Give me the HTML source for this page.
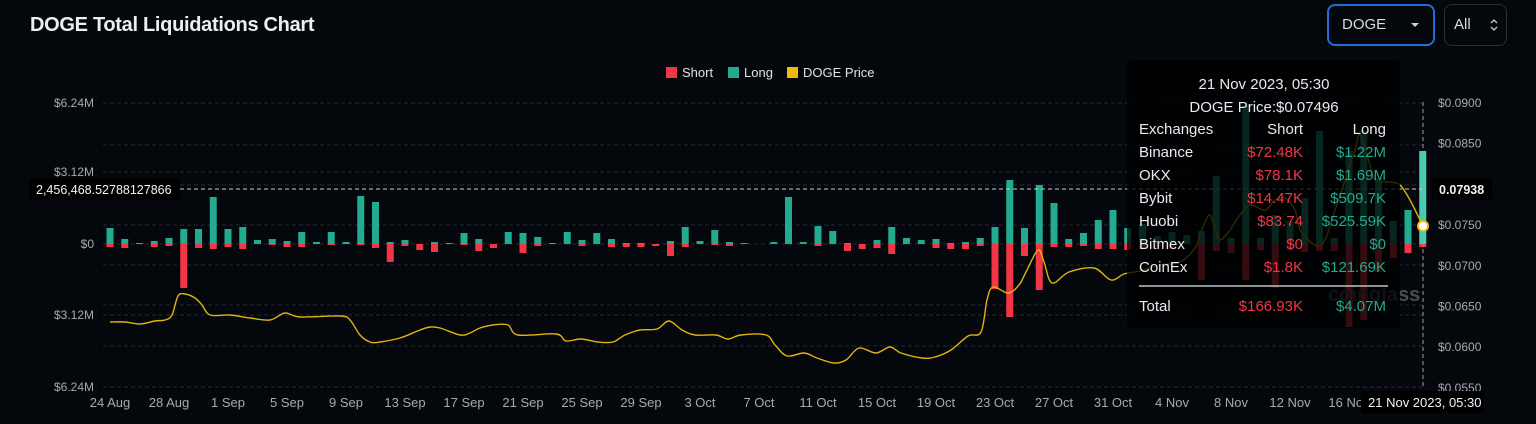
<!DOCTYPE html>
<html><head><meta charset="utf-8"><style>
html,body{margin:0;padding:0;background:#04070c;width:1536px;height:424px;overflow:hidden;font-family:"Liberation Sans",sans-serif;}
.t{position:absolute;left:30px;top:14px;color:#eceef2;font-size:20px;font-weight:bold;letter-spacing:-0.3px}
.sel{position:absolute;left:1327px;top:4px;width:104px;height:38px;border:2px solid #1f6fd6;border-radius:8px;color:#d8dbe0;font-size:15px;line-height:38px;box-sizing:content-box}
.sel span{position:absolute;left:13px}
.sel i{position:absolute;left:82px;top:17px;width:0;height:0;border-left:4px solid transparent;border-right:4px solid transparent;border-top:4px solid #c8cbd0}
.all{position:absolute;left:1444px;top:4px;width:61px;height:40px;border:1px solid #2a2e36;border-radius:8px;color:#d8dbe0;font-size:15px;line-height:40px}
.all span{position:absolute;left:9px}
svg{position:absolute;left:0;top:0}
</style></head><body>
<div class="t">DOGE Total Liquidations Chart</div>
<div class="sel"><span>DOGE</span><i></i></div>
<div class="all"><span>All</span>
<svg style="left:44px;top:12px" width="10" height="16"><path d="M2 6 L5 3 L8 6 M2 10 L5 13 L8 10" stroke="#c8cbd0" stroke-width="1.3" fill="none"/></svg></div>
<svg id="c" width="1536" height="424" xmlns="http://www.w3.org/2000/svg" font-family="Liberation Sans, sans-serif"></svg>
<script>
var L=[16,5,1,3,6,15,15,47,15,17,4,5,3,12,2,12,2,48,42,2,4,0,2,1,11,5,0,12,11,7,1,12,4,11,5,1,1,0,3,17,3,14,2,1,0,2,47,2,18,13,1,0,4,17,6,4,5,1,2,6,17,64,16,59,41,5,11,24,34,16,20,8,12,9,13,68,6,139,6,29,23,46,113,6,93,113,66,23,34,93];
var S=[3,4,0,3,2,44,4,5,3,5,0,1,3,3,0,1,0,1,4,18,2,6,8,0,1,7,4,0,9,2,0,0,2,0,3,3,3,2,12,3,0,1,2,0,0,0,0,0,2,0,7,5,4,10,0,0,4,5,5,2,45,73,12,46,3,3,2,5,5,6,4,3,5,0,36,7,9,36,6,44,6,8,7,7,83,76,28,14,9,3];
var P=[[110,322],[125,322],[140,324],[155,321],[165,320],[172,315],[178,296],[185,294],[195,298],[202,305],[210,315],[230,315],[250,318],[270,320],[285,313],[300,317],[340,316],[350,320],[360,335],[370,342],[380,342],[400,338],[420,330],[430,327],[440,328],[460,335],[470,333],[480,328],[493,325],[508,325],[518,335],[556,334],[566,341],[581,339],[598,342],[613,342],[625,335],[640,330],[657,329],[669,321],[682,330],[695,335],[716,335],[728,339],[741,335],[766,335],[775,345],[787,356],[804,353],[817,358],[834,363],[846,360],[859,348],[876,353],[890,347],[901,353],[922,358],[935,357],[951,350],[968,336],[981,332],[987,300],[993,287],[1008,293],[1019,285],[1027,270],[1038,250],[1044,262],[1052,283],[1069,272],[1094,268],[1111,280],[1124,274],[1140,271],[1160,265],[1180,262],[1195,248],[1200,235],[1205,222],[1210,215],[1215,228],[1220,240],[1230,230],[1240,215],[1250,205],[1265,210],[1275,200],[1285,198],[1295,210],[1300,230],[1315,245],[1325,240],[1335,210],[1345,180],[1355,150],[1360,135],[1370,165],[1375,180],[1390,182],[1400,185],[1410,200],[1423,226]];
var s='';
var grid=[103,145,172,185,225,244,265,305,315,346,387];
grid.forEach(function(y){s+='<line x1="103" x2="1425" y1="'+y+'" y2="'+y+'" stroke="#262a30" stroke-dasharray="4 3"/>';});
var la=[['$6.24M',103],['$3.12M',172],['$0',244],['$3.12M',315],['$6.24M',387]];
la.forEach(function(a){s+='<text x="94" y="'+(a[1]+4)+'" text-anchor="end" fill="#a7aab0" font-size="12">'+a[0]+'</text>';});
var ra=['$0.0900','$0.0850','$0.0800','$0.0750','$0.0700','$0.0650','$0.0600','$0.0550'];
ra.forEach(function(t,i){if(i==2)return;var y=102+i*40.7;s+='<text x="1438" y="'+(y+5)+'" fill="#a7aab0" font-size="12">'+t+'</text>';});
var xl=['24 Aug','28 Aug','1 Sep','5 Sep','9 Sep','13 Sep','17 Sep','21 Sep','25 Sep','29 Sep','3 Oct','7 Oct','11 Oct','15 Oct','19 Oct','23 Oct','27 Oct','31 Oct','4 Nov','8 Nov','12 Nov','16 Nov'];
xl.forEach(function(t,i){s+='<text x="'+(110+i*59)+'" y="407" text-anchor="middle" fill="#a7aab0" font-size="13">'+t+'</text>';});
for(var i=0;i<90;i++){var x=110+i*14.75-3.5;
 if(L[i])s+='<rect x="'+x+'" y="'+(244-L[i])+'" width="7" height="'+L[i]+'" fill="'+(i==89?'#3fd1b4':'#22ab91')+'"/>';
 if(S[i])s+='<rect x="'+x+'" y="244" width="7" height="'+S[i]+'" fill="#f23645"/>';}
var d='M'+P[0][0]+' '+P[0][1];
for(var k=0;k<P.length-1;k++){var p0=P[k?k-1:0],p1=P[k],p2=P[k+1],p3=P[k+2<P.length?k+2:k+1];
 var c1x=p1[0]+(p2[0]-p0[0])/6,c1y=p1[1]+(p2[1]-p0[1])/6,c2x=p2[0]-(p3[0]-p1[0])/6,c2y=p2[1]-(p3[1]-p1[1])/6;
 d+=' C'+c1x.toFixed(1)+' '+c1y.toFixed(1)+' '+c2x.toFixed(1)+' '+c2y.toFixed(1)+' '+p2[0]+' '+p2[1];}
s+='<path d="'+d+'" fill="none" stroke="#e0b30e" stroke-width="1.4" stroke-linejoin="round"/>';
s+='<line x1="103" x2="1425" y1="189" y2="189" stroke="#c8ccd2" stroke-dasharray="4 3"/>';
s+='<line x1="1423" x2="1423" y1="102" y2="387" stroke="#9aa0a8" stroke-dasharray="4 3"/>';
s+='<text x="1328" y="301" fill="#4a4d52" font-size="20" font-weight="bold">coinglass</text>';
s+='<rect x="1127" y="60" width="273" height="268" rx="4" fill="#000" fill-opacity="0.78"/>';
s+='<circle cx="1423" cy="226" r="5" fill="#fff" stroke="#f0b90b" stroke-width="2"/>';
s+='<g font-size="15" fill="#e8eaee"><text x="1264" y="89" text-anchor="middle">21 Nov 2023, 05:30</text><text x="1264" y="112" text-anchor="middle">DOGE Price:$0.07496</text>';
var rows=[['Binance','$72.48K','$1.22M'],['OKX','$78.1K','$1.69M'],['Bybit','$14.47K','$509.7K'],['Huobi','$83.74','$525.59K'],['Bitmex','$0','$0'],['CoinEx','$1.8K','$121.69K']];
s+='<text x="1139" y="134">Exchanges</text><text x="1303" y="134" text-anchor="end">Short</text><text x="1386" y="134" text-anchor="end">Long</text>';
rows.forEach(function(r,k){var y=157+k*23;s+='<text x="1139" y="'+y+'">'+r[0]+'</text><text x="1303" y="'+y+'" text-anchor="end" fill="#f23645">'+r[1]+'</text><text x="1386" y="'+y+'" text-anchor="end" fill="#22ab91">'+r[2]+'</text>';});
s+='<text x="1139" y="311">Total</text><text x="1303" y="311" text-anchor="end" fill="#f23645">$166.93K</text><text x="1386" y="311" text-anchor="end" fill="#22ab91">$4.07M</text></g>';
s+='<line x1="1139" x2="1388" y1="286" y2="286" stroke="#bfc2c7" stroke-width="1.5"/>';
s+='<rect x="666" y="67" width="11" height="11" fill="#f23645"/><text x="682" y="77" fill="#e0e2e6" font-size="13">Short</text>';
s+='<rect x="728" y="67" width="11" height="11" fill="#22ab91"/><text x="744" y="77" fill="#e0e2e6" font-size="13">Long</text>';
s+='<rect x="787" y="67" width="11" height="11" fill="#f0b90b"/><text x="803" y="77" fill="#e0e2e6" font-size="13">DOGE Price</text>';
s+='<rect x="29" y="178" width="151" height="22" rx="3" fill="#000"/><text x="36" y="194" fill="#f2f3f5" font-size="12.5">2,456,468.52788127866</text>';
s+='<rect x="1432" y="178" width="60" height="22" rx="3" fill="#000"/><text x="1439" y="194" fill="#f2f3f5" font-size="12.5" font-weight="bold">0.07938</text>';
s+='<rect x="1361" y="391" width="123" height="22" fill="#000"/><text x="1368" y="407" fill="#f2f3f5" font-size="13">21 Nov 2023, 05:30</text>';
document.getElementById('c').innerHTML=s;
</script>
</body></html>
